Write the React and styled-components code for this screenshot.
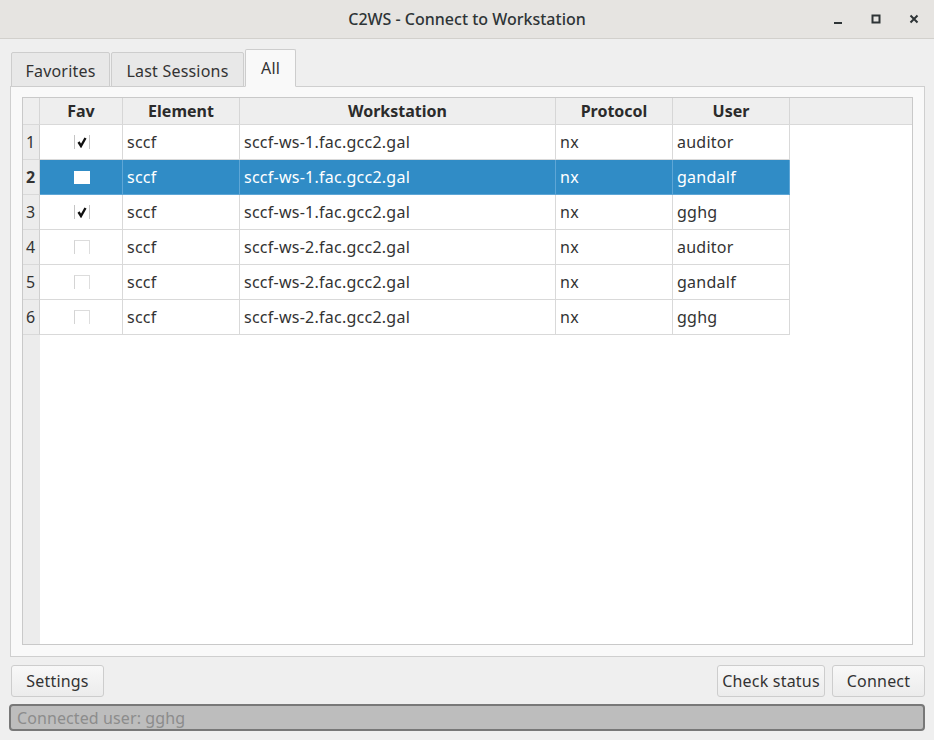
import React from "react";
import styled, { createGlobalStyle } from "styled-components";

const GlobalStyle = createGlobalStyle`
  html, body {
    margin: 0;
    padding: 0;
    background: #efefef;
  }
  body {
    font-family: "Noto Sans", "DejaVu Sans", sans-serif;
    color: #333;
  }
`;

const Window = styled.div`
  width: 934px;
  height: 740px;
  display: flex;
  flex-direction: column;
  background: #efefef;
  overflow: hidden;
`;

const TitleBar = styled.div`
  height: 38px;
  flex-shrink: 0;
  display: flex;
  align-items: center;
  justify-content: center;
  position: relative;
  background: #e6e4e1;
  border-bottom: 1px solid #d2d0cc;
  font-size: 16px;
  font-weight: 500;
  color: #2e3436;
`;

const Controls = styled.div`
  position: absolute;
  right: 12px;
  top: 0;
  height: 38px;
  display: flex;
  align-items: center;
  gap: 22px;
`;

const ControlIcon = styled.svg`
  width: 16px;
  height: 16px;
  display: block;
`;

const Body = styled.div`
  flex: 1;
  display: flex;
  flex-direction: column;
  padding: 10px 9px 9px 10px;
  min-height: 0;
`;

const TabBar = styled.div`
  display: flex;
  align-items: flex-end;
  height: 38px;
  padding-left: 1px;
  margin-bottom: -1px;
  position: relative;
  z-index: 1;
`;

const Tab = styled.div`
  box-sizing: border-box;
  width: ${(p) => p.w}px;
  height: ${(p) => (p.active ? "38px" : "35px")};
  display: flex;
  align-items: center;
  justify-content: center;
  font-size: 16px;
  letter-spacing: 0.2px;
  color: #333;
  background: ${(p) => (p.active ? "#f9f9f9" : "#e8e8e8")};
  border: 1px solid #cdcdcd;
  border-bottom: ${(p) => (p.active ? "1px solid #f9f9f9" : "1px solid #cdcdcd")};
  border-radius: 2px 2px 0 0;
  margin-right: 1px;
  padding-top: ${(p) => (p.active ? "0" : "2px")};
`;

const Panel = styled.div`
  flex: 1;
  min-height: 0;
  display: flex;
  flex-direction: column;
  background: #f9f9f9;
  border: 1px solid #cfcfcf;
  padding: 10px 11px 11px 11px;
`;

const TableView = styled.div`
  flex: 1;
  border: 1px solid #c9c9c9;
  background: linear-gradient(to right, #ececec 17px, #ffffff 17px);
  overflow: hidden;
`;

const columns = "17px 83px 117px 316px 117px 117px";

const HeaderRow = styled.div`
  display: grid;
  grid-template-columns: ${columns};
  height: 27px;
  background: #eeeeee;
  border-bottom: 1px solid #d9d9d9;
  box-sizing: border-box;
`;

const HeaderCell = styled.div`
  display: flex;
  align-items: center;
  justify-content: center;
  font-size: 16px;
  font-weight: 700;
  color: #2b2b2b;
  border-right: 1px solid #d6d6d6;
`;

const Row = styled.div`
  display: grid;
  grid-template-columns: ${columns};
  height: 35px;
`;

const RowNum = styled.div`
  display: flex;
  align-items: center;
  padding-left: 3px;
  font-size: 16px;
  font-weight: ${(p) => (p.selected ? 700 : 400)};
  color: #333;
  background: #ececec;
  border-right: 1px solid #d0d0d0;
  border-bottom: 1px solid #d9d9d9;
`;

const Cell = styled.div`
  display: flex;
  align-items: center;
  justify-content: ${(p) => (p.center ? "center" : "flex-start")};
  padding-left: ${(p) => (p.center ? "0" : "4px")};
  font-size: 16px;
  letter-spacing: 0.25px;
  color: ${(p) => (p.selected ? "#ffffff" : "#333")};
  background: ${(p) => (p.selected ? "#308cc6" : "#ffffff")};
  border-right: 1px solid ${(p) => (p.selected ? "#5ea6d6" : "#d9d9d9")};
  border-bottom: 1px solid ${(p) => (p.selected ? "#5ea6d6" : "#d9d9d9")};
  white-space: nowrap;
  overflow: hidden;
`;

const CheckBox = styled.span`
  position: relative;
  box-sizing: border-box;
  width: 16px;
  height: 14px;
  display: block;
  margin-left: 1px;
  border-left: 1px solid ${(p) => (p.checked ? "#c4c4c4" : "#d4d4d4")};
  border-right: 1px solid ${(p) => (p.checked ? "#c4c4c4" : "#dedede")};
  border-top: ${(p) => (p.checked ? "none" : "1px solid #dcdcdc")};
`;

const SelectedBox = styled.span`
  width: 16px;
  height: 13px;
  margin-left: 1px;
  display: block;
  background: #ffffff;
`;

const Tick = styled.svg`
  position: absolute;
  left: 1px;
  top: 1px;
  width: 12px;
  height: 12px;
`;

const ButtonRow = styled.div`
  display: flex;
  align-items: center;
  margin-top: 8px;
  height: 32px;
  padding-left: 1px;
`;

const Spacer = styled.div`
  flex: 1;
`;

const Button = styled.button`
  box-sizing: border-box;
  width: ${(p) => p.w}px;
  height: 32px;
  padding: 0;
  margin-left: ${(p) => p.gap || 0}px;
  font-family: "Noto Sans", "DejaVu Sans", sans-serif;
  font-size: 16px;
  letter-spacing: 0.2px;
  color: #333;
  background: linear-gradient(#f8f8f8, #ececec);
  border: 1px solid #cdcdcd;
  border-radius: 3px;
`;

const StatusField = styled.div`
  margin-top: 7px;
  height: 27px;
  box-sizing: border-box;
  display: flex;
  align-items: center;
  padding-left: 6px;
  margin-left: -1px;
  background: #bdbdbd;
  border: 2px solid #787878;
  border-radius: 4px;
  font-size: 16px;
  letter-spacing: 0.1px;
  color: #8c8c8c;
`;

const rows = [
  { ws: "sccf-ws-1.fac.gcc2.gal", user: "auditor", fav: true },
  { ws: "sccf-ws-1.fac.gcc2.gal", user: "gandalf", fav: false, selected: true },
  { ws: "sccf-ws-1.fac.gcc2.gal", user: "gghg", fav: true },
  { ws: "sccf-ws-2.fac.gcc2.gal", user: "auditor", fav: false },
  { ws: "sccf-ws-2.fac.gcc2.gal", user: "gandalf", fav: false },
  { ws: "sccf-ws-2.fac.gcc2.gal", user: "gghg", fav: false },
];

const FavMark = ({ checked, selected }) => {
  if (selected) return <SelectedBox />;
  return (
    <CheckBox checked={checked}>
      {checked && (
        <Tick viewBox="0 0 12 12">
          <path d="M2.5 6 L5 10 L9.5 2" fill="none" stroke="#111" strokeWidth="2.4" />
        </Tick>
      )}
    </CheckBox>
  );
};

export default function App() {
  return (
    <>
      <GlobalStyle />
      <Window>
        <TitleBar>
          C2WS - Connect to Workstation
          <Controls>
            <ControlIcon viewBox="0 0 16 16">
              <rect x="4" y="11" width="8" height="2" fill="#2e3436" />
            </ControlIcon>
            <ControlIcon viewBox="0 0 16 16">
              <rect x="4.5" y="4.5" width="7" height="7" fill="none" stroke="#2e3436" strokeWidth="2" />
            </ControlIcon>
            <ControlIcon viewBox="0 0 16 16">
              <path d="M4.5 4.5 L11.5 11.5 M11.5 4.5 L4.5 11.5" stroke="#2e3436" strokeWidth="2" />
            </ControlIcon>
          </Controls>
        </TitleBar>
        <Body>
          <TabBar>
            <Tab w={99}>Favorites</Tab>
            <Tab w={133}>Last Sessions</Tab>
            <Tab w={51} active>
              All
            </Tab>
          </TabBar>
          <Panel>
            <TableView>
              <HeaderRow>
                <HeaderCell />
                <HeaderCell>Fav</HeaderCell>
                <HeaderCell>Element</HeaderCell>
                <HeaderCell>Workstation</HeaderCell>
                <HeaderCell>Protocol</HeaderCell>
                <HeaderCell>User</HeaderCell>
              </HeaderRow>
              {rows.map((r, i) => (
                <Row key={i}>
                  <RowNum selected={r.selected}>{i + 1}</RowNum>
                  <Cell center selected={r.selected}>
                    <FavMark checked={r.fav} selected={r.selected} />
                  </Cell>
                  <Cell selected={r.selected}>sccf</Cell>
                  <Cell selected={r.selected}>{r.ws}</Cell>
                  <Cell selected={r.selected}>nx</Cell>
                  <Cell selected={r.selected}>{r.user}</Cell>
                </Row>
              ))}
            </TableView>
          </Panel>
          <ButtonRow>
            <Button w={93}>Settings</Button>
            <Spacer />
            <Button w={108}>Check status</Button>
            <Button w={93} gap={7}>
              Connect
            </Button>
          </ButtonRow>
          <StatusField>Connected user: gghg</StatusField>
        </Body>
      </Window>
    </>
  );
}
